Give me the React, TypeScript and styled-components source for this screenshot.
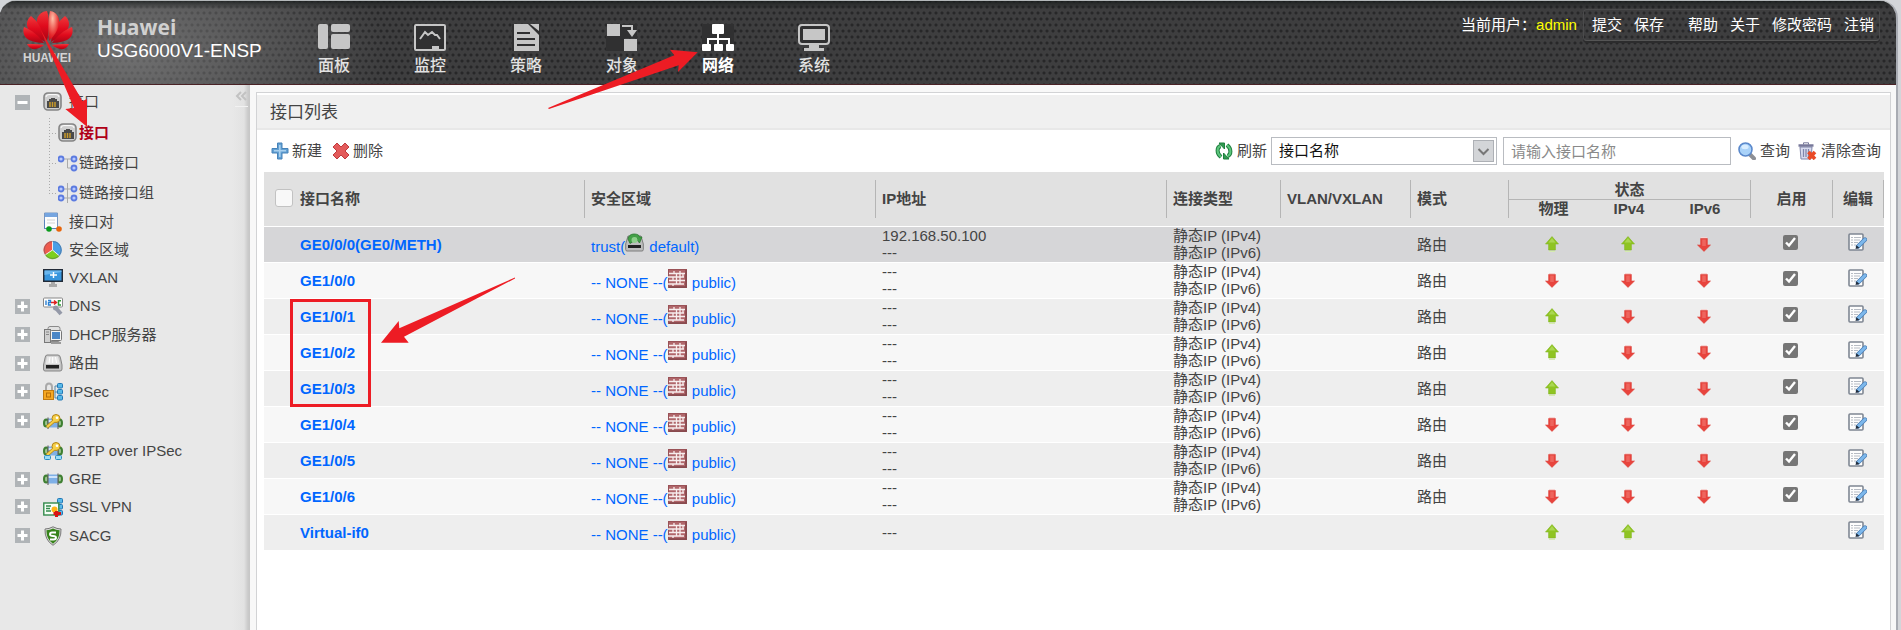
import React from 'react';
import styled, { createGlobalStyle, css } from 'styled-components';

const GlobalStyle = createGlobalStyle`
  *, *::before, *::after { box-sizing: border-box; }
  body {
    margin: 0;
    background: #d3d5d9;
    color: #444;
    font: 15px/18px "Liberation Sans", "Noto Sans CJK SC", sans-serif;
  }
  a { color: inherit; text-decoration: none; }
  svg { display: block; flex: none; }
  button, input, select { font: inherit; color: inherit; }
`;

/* ---------- page frame ---------- */

const Shell = styled.div`
  position: relative;
  display: flex;
  flex-direction: column;
  min-height: 100vh;
  margin-right: 3px;
  border-top: 1px solid #b4b8ba;
  border-right: 2px solid #a9acb3;
  border-radius: 16px 18px 0 0;
  background: #f8f8f8;
  overflow: hidden;
`;

const Header = styled.header`
  display: flex;
  align-items: flex-start;
  height: 84px;
  border-bottom: 1px solid #4a2226;
  background-color: #3e3e3f;
  background-image:
    linear-gradient(180deg, rgba(20, 24, 24, 0.7), rgba(20, 24, 24, 0) 8px),
    radial-gradient(ellipse 260px 150px at 125px 50px, rgba(160, 160, 160, 0.52), rgba(160, 160, 160, 0)),
    radial-gradient(circle at center, #272728 1px, rgba(39, 39, 40, 0) 2px),
    radial-gradient(circle at center, #272728 1px, rgba(39, 39, 40, 0) 2px);
  background-size: auto, auto, 6px 12px, 6px 12px;
  background-position: 0 0, 0 0, 0 0, 3px 6px;
`;

const Brand = styled.div`
  display: flex;
  flex: none;
  gap: 24px;
  width: 286px;
  padding: 10px 0 0 23px;
`;

const Product = styled.div`
  padding-top: 4px;
  color: #fff;
  font-size: 19px;
  line-height: 24px;
`;

const ProductName = styled.div`
  color: #d0d0d0;
  font-family: "Open Sans", "Liberation Sans", sans-serif;
  font-size: 21px;
  font-weight: 700;
`;

const Nav = styled.nav`
  display: flex;
`;

const NavLink = styled.a<{ $active?: boolean }>`
  display: flex;
  flex-direction: column;
  align-items: center;
  gap: 3px;
  width: 96px;
  padding-top: 23px;
  color: ${p => (p.$active ? '#fff' : '#c6c6c6')};
  font-size: 16px;
  font-weight: ${p => (p.$active ? 700 : 500)};
  line-height: 24px;
  span { color: ${p => (p.$active ? '#fff' : '#e2e2e2')}; }
`;

const UserArea = styled.div`
  display: flex;
  align-items: center;
  margin: 8px 16px 0 auto;
  color: #fff;
  white-space: nowrap;
`;

const UserName = styled.span`
  margin-right: 6px;
  color: #ff0;
`;

const UserMenu = styled.nav`
  display: flex;
  gap: 12px;
  padding: 6px 5px 6px 8px;
  border: 1px solid #4b4b4c;
  border-bottom-color: #555;
  border-radius: 4px;
  box-shadow: 0 2px 0 #2c2c2d;
`;

const MenuGap = styled.span`
  width: 0;
`;

const Body = styled.div`
  display: flex;
  flex: 1;
`;

/* ---------- sidebar ---------- */

const Sidebar = styled.aside`
  position: relative;
  flex: none;
  width: 250px;
  padding-top: 1px;
  background: linear-gradient(90deg, #e8e8e8 232px, #e2e2e2 244px, #cacaca 248px, #c6c6c6);
`;

const Collapse = styled.button`
  position: absolute;
  top: 1px;
  right: 2px;
  width: 13px;
  height: 21px;
  padding: 0;
  border: 0;
  border-bottom: 1px solid #f2f2f2;
  background: none;
  cursor: pointer;
`;

const Tree = styled.ul`
  margin: 0;
  padding: 0;
  list-style: none;
`;

const TreeRow = styled.div<{ $h: number }>`
  display: flex;
  align-items: center;
  height: ${p => p.$h}px;
  padding-left: 15px;
  white-space: nowrap;
`;

const Toggle = styled.button`
  display: flex;
  align-items: center;
  justify-content: center;
  width: 15px;
  height: 15px;
  margin-right: 13px;
  padding: 0;
  border: 0;
  background: #b0b4b7;
  cursor: pointer;
`;

const ToggleSpace = styled.span`
  width: 28px;
`;

const TreeLink = styled.a`
  display: flex;
  align-items: center;
  gap: 6px;
`;

const SubTree = styled(Tree)`
  margin-left: 49px;
  background: repeating-linear-gradient(180deg, #aaa 0 1px, transparent 1px 3px) 0 0 / 1px 76px no-repeat;
`;

const SubLink = styled.a<{ $active?: boolean }>`
  display: flex;
  align-items: center;
  gap: 1px;
  height: 30px;
  color: ${p => (p.$active ? '#b00018' : 'inherit')};
  font-weight: ${p => (p.$active ? 700 : 400)};
  &::before {
    content: "";
    width: 8px;
    height: 1px;
    background: repeating-linear-gradient(90deg, #aaa 0 1px, transparent 1px 3px);
  }
`;

/* ---------- content ---------- */

const Content = styled.main`
  flex: 1;
  min-width: 0;
  display: flex;
  padding: 7px 5px 0 6px;
`;

const Panel = styled.section`
  flex: 1;
  min-width: 0;
  border: solid #d2d3d5;
  border-width: 1px 1px 0;
  background: #fff;
`;

const PanelTitle = styled.h1`
  margin: 2px 0 0;
  padding: 5px 13px 2px;
  border-bottom: 2px solid #e8e8e8;
  background: #f0f0f0;
  font-size: 17px;
  font-weight: 400;
  line-height: 26px;
`;

const Toolbar = styled.div`
  display: flex;
  align-items: center;
  height: 42px;
  padding: 0 9px 0 14px;
`;

const ToolButton = styled.button`
  display: flex;
  align-items: center;
  gap: 3px;
  margin-right: 10px;
  padding: 0;
  border: 0;
  background: none;
  cursor: pointer;
  white-space: nowrap;
`;

const Filters = styled.form`
  display: flex;
  align-items: center;
  margin-left: auto;
  ${ToolButton} { gap: 4px; margin-right: 7px; }
  ${ToolButton}:first-child { margin-right: 4px; }
  ${ToolButton}:last-child { margin-right: 0; }
`;

const field = css`
  height: 28px;
  padding: 0 7px;
  border: 1px solid #b9bcc1;
  border-radius: 0;
  background: #fff;
  outline: 0;
`;

const SelectBox = styled.label`
  position: relative;
  display: block;
  margin-right: 6px;
  svg {
    position: absolute;
    top: 3px;
    right: 3px;
    pointer-events: none;
  }
`;

const Select = styled.select`
  ${field}
  width: 226px;
  color: #111;
  appearance: none;
`;

const Query = styled.input`
  ${field}
  width: 228px;
  margin-right: 7px;
  &::placeholder { color: #8a8a8a; opacity: 1; }
`;

const TableWrap = styled.div`
  padding: 0 6px 0 7px;
`;

const Table = styled.table`
  width: 100%;
  border-spacing: 0;
  table-layout: fixed;
`;

const Head = styled.th<{ $pos?: 'upper' | 'lower' }>`
  padding: ${p => (p.$pos === 'upper' ? '8px 0 0' : p.$pos === 'lower' ? '0 0 8px' : '8px 0')};
  border-bottom: ${p => (p.$pos === 'upper' ? '0' : '1px solid #fff')};
  background: #e1e1e1;
  text-align: left;
`;

const HeadLabel = styled.div<{ $h?: number; $bar?: boolean; $center?: boolean; $under?: boolean; $end?: boolean }>`
  display: flex;
  align-items: center;
  justify-content: ${p => (p.$center ? 'center' : 'flex-start')};
  height: ${p => p.$h ?? 38}px;
  padding-left: ${p => (p.$center ? 0 : 6)}px;
  border: 0 solid #b5b5b5;
  border-left-width: ${p => (p.$bar === false ? 0 : 1)}px;
  border-right-width: ${p => (p.$end ? 1 : 0)}px;
  border-bottom-width: ${p => (p.$under ? 1 : 0)}px;
  white-space: nowrap;
`;

const SelectAll = styled.input`
  appearance: none;
  width: 18px;
  height: 18px;
  margin: 0 7px 3px 5px;
  border: 1px solid #c2c2c2;
  border-radius: 3px;
  background: #f8f8f8;
`;

const Cell = styled.td<{ $center?: boolean }>`
  height: 36px;
  padding: ${p => (p.$center ? '0 2px 1px 0' : '0 0 1px 7px')};
  border-bottom: 1px solid #fff;
  line-height: 17px;
  text-align: ${p => (p.$center ? 'center' : 'left')};
  vertical-align: middle;
  white-space: nowrap;
  & > svg { margin: 0 auto; }
`;

const Row = styled.tr`
  background: #eee;
  &:nth-child(even) { background: #f7f7f7; }
  &:first-child { background: #d6d6d8; }
  &:last-child ${Cell} { height: 35px; border-bottom: 0; }
`;

const NameCell = styled(Cell)`
  padding-left: 36px;
`;

const NameLink = styled.a`
  color: #06f;
  font-weight: 700;
`;

const ZoneLink = styled.a`
  color: #06f;
  svg { display: inline-block; vertical-align: baseline; margin-right: 1px; }
`;

const Enable = styled.input`
  display: block;
  width: 15px;
  height: 15px;
  margin: 0 auto 4px;
  accent-color: #767676;
`;

const EditButton = styled.button`
  display: block;
  margin: 0 auto 3px;
  padding: 0;
  border: 0;
  background: none;
  cursor: pointer;
`;

const Marks = styled.svg`
  position: absolute;
  top: -1px;
  left: 0;
  pointer-events: none;
`;

/* ---------- drawings ---------- */

const Logo = () => (
  <svg width="50" height="54" viewBox="23 11 50 54" role="img" aria-label="Huawei">
    <defs>
      <linearGradient id="petal" x1="0" y1="0" x2="0" y2="1">
        <stop offset="0" stopColor="#ef3a3c" />
        <stop offset="0.5" stopColor="#e00a1c" />
        <stop offset="1" stopColor="#a80515" />
      </linearGradient>
      <radialGradient id="petalGlow" cx="0.4" cy="0.25" r="0.8">
        <stop offset="0" stopColor="#ffc0a8" />
        <stop offset="0.7" stopColor="#e62a2c" />
        <stop offset="1" stopColor="#c80a1a" />
      </radialGradient>
    </defs>
    <g fill="url(#petal)">
      <path d="M47 11 C39 12 36 18 37 24 C38 31 43 37 47 41 C49 32 50 19 47 11Z" />
      <path d="M31 16 C26 20 26 26 29 30 C33 36 40 39 45 42 C44 33 39 22 31 16Z" />
      <path d="M24 27 C22 33 25 38 29 40 C33 42 39 43 44 43 C40 37 32 30 24 27Z" />
      <path d="M27 44 C30 50 35 50 39 48 C41 47 43 46 44 45 C40 44 33 44 27 44Z" />
      <path d="M65 16 C70 20 70 26 67 30 C63 36 56 39 51 42 C52 33 57 22 65 16Z" />
      <path d="M72 27 C74 33 71 38 67 40 C63 42 57 43 52 43 C56 37 64 30 72 27Z" />
      <path d="M69 44 C66 50 61 50 57 48 C55 47 53 46 52 45 C56 44 63 44 69 44Z" />
    </g>
    <path fill="url(#petalGlow)" d="M50 11 C57 12 60 18 59 24 C58 31 53 37 49 41 C48 32 48 19 50 11Z" />
    <text x="23" y="62" fill="#d4d4d4" fontFamily="Liberation Sans" fontWeight="700" fontSize="12">HUAWEI</text>
  </svg>
);

const NavIcon = ({ kind }: { kind: string }) => (
  <svg width="32" height="27" viewBox="0 0 32 27" fill="currentColor" aria-hidden="true">
    {kind === 'panel' && (
      <>
        <rect width="10" height="25" rx="2" />
        <rect x="13" width="19" height="8" rx="2" />
        <rect x="13" y="10" width="19" height="15" rx="2" />
      </>
    )}
    {kind === 'monitor' && (
      <>
        <rect x="1" y="1" width="30" height="25" rx="1" fill="#303031" stroke="currentColor" strokeWidth="2" />
        <path d="M6 15 L11 8 L14 11 L18 8 L21 11 L23 11 L26 15" fill="none" stroke="currentColor" strokeWidth="2" />
        <path d="M18 26 V22 H25 V26Z" />
      </>
    )}
    {kind === 'policy' && (
      <>
        <rect x="2" width="28" height="27" fill="#303031" />
        <path d="M4 0 H18 L29 11 V27 H4Z" />
        <path d="M20 0 H29 V7Z" />
        <path d="M7 9 H20 M7 15 H25 M7 21 H25" stroke="#303031" strokeWidth="2" />
      </>
    )}
    {kind === 'object' && (
      <>
        <path d="M0 12 H18 V27 H0Z M14 0 H31 V14 H14Z" fill="#303031" />
        <rect x="1" width="13" height="12" />
        <rect x="18" y="15" width="13" height="12" />
        <path d="M16 2 H26 V7" fill="none" stroke="currentColor" strokeWidth="2" />
        <path d="M21 6 H31 L26 13Z" />
      </>
    )}
    {kind === 'network' && (
      <>
        <rect width="32" height="27" fill="#303031" />
        <rect x="10" width="12" height="10" rx="1" />
        <path d="M16 9 V21 M6 21 V15 H27 V21" fill="none" stroke="currentColor" strokeWidth="2" />
        <rect y="20" width="9" height="7" rx="1" />
        <rect x="12" y="20" width="9" height="7" rx="1" />
        <rect x="24" y="20" width="8" height="7" rx="1" />
      </>
    )}
    {kind === 'system' && (
      <>
        <rect x="1" y="1" width="30" height="19" rx="3" fill="#303031" stroke="currentColor" strokeWidth="2" />
        <rect x="5" y="5" width="22" height="11" />
        <path d="M11 20 H21 V24 H26 V27 H6 V24 H11Z" />
      </>
    )}
  </svg>
);

const Port = () => (
  <>
    <rect x="1" y="1" width="17" height="17" rx="4" fill="#cfcfcf" stroke="#858585" strokeWidth="1.6" />
    <path d="M3 5 Q3 2.6 6 2.6 H13 Q16 2.6 16 5" fill="none" stroke="#fff" />
    <path d="M4 9 H6 V7 H8 V6 H12 V7 H14 V9 H16 V16 H4Z" fill="#4a4a4a" />
    <path d="M7 10 V15 M9.5 10 V15 M12 10 V15" stroke="#c99a2a" strokeWidth="1.5" />
  </>
);

const Nodes = ({ at }: { at: number[][] }) => (
  <>
    {at.map(([x, y]) => (
      <circle key={`${x}-${y}`} cx={x} cy={y} r="2.5" fill="#b9caff" stroke="#5c7be0" strokeWidth="1.8" />
    ))}
  </>
);

const Blocks = () => (
  <g fill="#58b9e8" stroke="#2277b5" strokeWidth="1">
    <rect x="14.5" y="1.5" width="5" height="4.5" rx="1" />
    <rect x="14.5" y="7.5" width="5" height="4.5" rx="1" />
    <rect x="14.5" y="13.5" width="5" height="4.5" rx="1" />
  </g>
);

const Tunnel = () => (
  <>
    <ellipse cx="3.2" cy="10" rx="2.2" ry="3.6" fill="#9bc48f" stroke="#3e7f31" strokeWidth="2" />
    <ellipse cx="16.8" cy="10" rx="2.2" ry="3.6" fill="#9bc48f" stroke="#3e7f31" strokeWidth="2" />
    <rect x="5" y="5.5" width="10" height="9" fill="#7fb0e6" />
    <path d="M5 8 H15" stroke="#cfe3fa" strokeWidth="2" />
    <path d="M5 4.5 V16 M15 4.5 V16" stroke="#666" strokeWidth="1.2" />
  </>
);

const Key = () => (
  <>
    <path d="M4 14 L12 7" stroke="#b58514" strokeWidth="3.6" />
    <circle cx="13" cy="5.5" r="4" fill="#f5cf4a" stroke="#b58514" />
    <path d="M4 14 L12 7" stroke="#f5cf4a" strokeWidth="2.2" />
    <circle cx="14" cy="4.8" r="1.3" fill="#fff" />
  </>
);

const TreeIcon = ({ kind }: { kind: string }) => (
  <svg width="20" height="20" viewBox="0 0 20 20" aria-hidden="true">
    {kind === 'port' && <Port />}
    {kind === 'link' && (
      <>
        <path d="M6 6 H14 M9.5 6 V15 H14" fill="none" stroke="#aaa" />
        <Nodes at={[[3, 6], [16, 6], [16, 15]]} />
      </>
    )}
    {kind === 'group' && (
      <>
        <path d="M9.5 0 V20 M5 6 H14 M5 15 H14" stroke="#aaa" />
        <Nodes at={[[3, 6], [16, 6], [3, 15], [16, 15]]} />
      </>
    )}
    {kind === 'pair' && (
      <>
        <path d="M1.5 1 H14.5 V16.5 H1.5Z" fill="#fdfdfd" stroke="#7796c0" />
        <path d="M2 1 H14 V5 H2Z" fill="#75a5e0" />
        <path d="M4 8 H12 M4 11 H12" stroke="#d3d3d3" />
        <path d="M1.5 8 V16.5 H18" fill="none" stroke="#5a83bb" />
        <circle cx="6" cy="17" r="2.8" fill="#0a9a1c" />
        <circle cx="16" cy="17" r="2.8" fill="#e8650a" />
      </>
    )}
    {kind === 'pie' && (
      <>
        <path d="M9.5 10 L2 15 A9 9 0 0 1 9.5 1Z" fill="#ef5a4d" />
        <path d="M9.5 10 V1 A9 9 0 0 1 16.5 16Z" fill="#4aa0e8" />
        <path d="M9.5 10 L16.5 16 A9 9 0 0 1 2 15Z" fill="#7ccf1e" />
        <path d="M9.5 1 V10 L2 15 M9.5 10 L16.5 16" fill="none" stroke="#eee" />
        <circle cx="9.7" cy="10" r="8.5" fill="none" stroke="#556" strokeOpacity="0.45" />
      </>
    )}
    {kind === 'vxlan' && (
      <>
        <rect x="0" y="1" width="20" height="13" fill="#222b38" />
        <rect x="1.5" y="2.5" width="17" height="10" fill="#3795dd" />
        <path d="M1.5 7 L18.5 4 V2.5 H1.5Z" fill="#69b6ee" />
        <path d="M7 7 H14 M10.5 4 V10" stroke="#fff" strokeWidth="1.4" />
        <path d="M8 14 H12 V16 H14 V19 H6 V16 H8Z" fill="#aaa" />
      </>
    )}
    {kind === 'dns' && (
      <>
        <rect x="0.5" y="2" width="19" height="9" rx="1" fill="#fff" stroke="#888" />
        <path d="M3 4.5 V9 M5 4.5 H7.5 V6.5 H5.5 V9 H8" fill="none" stroke="#2a7fd0" strokeWidth="1.4" />
        <path d="M8 6.5 H13 M11 4.5 L13.5 6.5 L11 8.5" fill="none" stroke="#d22" strokeWidth="1.5" />
        <path d="M18 4.7 H15.5 V9 H18" fill="none" stroke="#2c9a35" strokeWidth="1.5" />
        <path d="M12 11 L18 18" stroke="#9499a8" strokeWidth="4" />
        <circle cx="12.5" cy="12" r="2.5" fill="#9499a8" />
      </>
    )}
    {kind === 'dhcp' && (
      <>
        <rect x="5" y="1.5" width="12" height="15" rx="2" fill="#e2e2e2" stroke="#8a8a8a" />
        <rect x="1.5" y="4.5" width="6" height="13" fill="#cfcfcf" stroke="#777" />
        <path d="M3 7 H6 M3 9.5 H6" stroke="#888" />
        <rect x="7.5" y="5.5" width="11" height="10" rx="1" fill="#f4f4f4" stroke="#777" />
        <rect x="9" y="7" width="8" height="7" fill="#4b86c6" />
        <path d="M8 18 H18" stroke="#999" strokeWidth="2" />
      </>
    )}
    {kind === 'route' && (
      <>
        <path d="M4 2 H15 Q17 2 17.5 5 L19 12 V16 Q19 18 17 18 H2 Q0.5 18 0.5 16 V12 L2 5 Q2.4 2 4 2Z" fill="#c4c4c4" stroke="#858585" />
        <path d="M4 3.5 H15 L17 11 H2.5Z" fill="#e6e6e6" />
        <path d="M7 4 L6 10 M9.7 4 V10 M12.5 4 L13.5 10" stroke="#fff" />
        <rect x="3" y="12" width="13" height="3.5" fill="#222" />
      </>
    )}
    {kind === 'ipsec' && (
      <>
        <path d="M3 9 V5 Q3 1.5 6 1.5 Q9 1.5 9 5 V9" fill="none" stroke="#aaa" strokeWidth="2" />
        <rect x="0.5" y="8.5" width="10" height="9" fill="#f6a823" stroke="#c07a12" />
        <rect x="3.5" y="11" width="4" height="4" fill="none" stroke="#b56d08" />
        <path d="M14 4 H12 V16 H14 M12 10 H14" fill="none" stroke="#5588a8" />
        <Blocks />
      </>
    )}
    {kind === 'l2tp' && (
      <g transform="translate(0 2)">
        <Tunnel />
        <Key />
      </g>
    )}
    {kind === 'l2tpsec' && (
      <>
        <Tunnel />
        <Key />
        <rect x="1.5" y="14.5" width="6" height="4" rx="1" fill="#9bdcf5" stroke="#2a8cc0" />
        <rect x="12.5" y="14.5" width="6" height="4" rx="1" fill="#9bdcf5" stroke="#2a8cc0" />
      </>
    )}
    {kind === 'gre' && <Tunnel />}
    {kind === 'ssl' && (
      <>
        <Blocks />
        <rect x="0.8" y="6" width="15" height="12" fill="#f7fff7" stroke="#338a4c" strokeWidth="1.4" />
        <path d="M3 9 H8 M3 11.5 H7 M3 14 H8" stroke="#338a4c" strokeWidth="1.4" />
        <circle cx="11.5" cy="12.5" r="3" fill="#ffb515" />
        <path d="M10.5 16.5 H18 M13.5 14 V20" stroke="#d81414" strokeWidth="3" />
      </>
    )}
    {kind === 'sacg' && (
      <>
        <path d="M10 0.8 Q14 3 18 3 Q18.5 14 10 19.3 Q1.5 14 2 3 Q6 3 10 0.8Z" fill="#dcdcdc" stroke="#777" />
        <path d="M10 2.4 Q13 4.2 16.6 4.2 Q16.6 13.3 10 17.8 Q3.4 13.3 3.4 4.2 Q7 4.2 10 2.4Z" fill="#37831b" />
        <path d="M13 6.5 H9 Q7 6.5 7 8.3 Q7 10 10 10 Q13 10 13 11.8 Q13 13.5 10.5 13.5 H7" fill="none" stroke="#fff" strokeWidth="1.9" />
      </>
    )}
  </svg>
);

const ToolIcon = ({ kind }: { kind: string }) => (
  <svg width={kind === 'clear' ? 20 : 18} height="18" viewBox="0 0 18 18" aria-hidden="true">
    {kind === 'add' && (
      <>
        <path d="M6.5 1 H11 V6.5 H17 V11 H11 V17 H6.5 V11 H1 V6.5 H6.5Z" fill="#62a0d3" stroke="#4682b8" strokeLinejoin="round" />
        <path d="M8.8 3 V15 M3 8.7 H15" stroke="#a9d0ee" strokeWidth="1.6" />
      </>
    )}
    {kind === 'delete' && (
      <path d="M5 1 L9 5 L13 1 L17 5 L13 9 L17 13 L13 17 L9 13 L5 17 L1 13 L5 9 L1 5Z" fill="#e35b5b" stroke="#c03a3e" strokeLinejoin="round" />
    )}
    {kind === 'refresh' && (
      <g fill="none" strokeLinejoin="round">
        <path d="M6 15 Q2.5 12 2.6 8.5 Q2.6 5 5.5 4" stroke="#1f7f3f" strokeWidth="4" />
        <path d="M12 3 Q15.5 6 15.4 9.5 Q15.4 13 12.5 14" stroke="#1f7f3f" strokeWidth="4" />
        <path d="M4 1 H9.5 V7Z" fill="#2f9a50" stroke="#1f7f3f" />
        <path d="M14 17 H8.5 V11Z" fill="#2f9a50" stroke="#1f7f3f" />
        <path d="M6 15 Q2.5 12 2.6 8.5 Q2.6 5 5.5 4" stroke="#5cc57c" strokeWidth="2" />
        <path d="M12 3 Q15.5 6 15.4 9.5 Q15.4 13 12.5 14" stroke="#5cc57c" strokeWidth="2" />
      </g>
    )}
    {kind === 'search' && (
      <>
        <path d="M11.5 12 L16 16.5" stroke="#8d8f95" strokeWidth="4" strokeLinecap="round" />
        <circle cx="7.5" cy="7.5" r="6.5" fill="#a9d2f9" stroke="#5b89cc" strokeWidth="1.6" />
        <ellipse cx="7" cy="5" rx="3.6" ry="2.2" fill="#d9edff" />
      </>
    )}
    {kind === 'clear' && (
      <>
        <path d="M2 5 H14 L13 17 H3Z" fill="#d9dcef" stroke="#8086ab" />
        <path d="M5.5 7 V15 M8 7 V15 M10.5 7 V15" stroke="#8086ab" strokeWidth="1.3" />
        <path d="M0.5 3.5 H15.5" stroke="#77789a" strokeWidth="2.4" />
        <path d="M5.5 2.5 V0.8 H10.5 V2.5" fill="none" stroke="#77789a" />
        <path d="M10.5 10 L17 17 M17 10 L10.5 17" stroke="#ea4a26" strokeWidth="3.6" />
      </>
    )}
  </svg>
);

const ChevronBox = () => (
  <svg width="21" height="22" viewBox="0 0 21 22" aria-hidden="true">
    <rect x="0.5" y="0.5" width="20" height="21" fill="#d3d5d8" stroke="#adb0b5" />
    <path d="M5.5 9 L10.5 14 L15.5 9" fill="none" stroke="#777" strokeWidth="2" />
  </svg>
);

const StateArrow = ({ up }: { up: boolean }) => (
  <svg width="14" height="16" viewBox="0 0 14 16" role="img" aria-label={up ? 'Up' : 'Down'}>
    {up ? (
      <>
        <path d="M7 0.6 L13.5 8 H10.4 V14 H3.6 V8 H0.5Z" fill="#8fc422" stroke="#83b722" strokeWidth="0.6" />
        <path d="M7 2 L10.5 6.5 H3.5Z" fill="#abd752" />
        <path d="M4 15.5 H10" stroke="#d5ecb0" />
      </>
    ) : (
      <>
        <path d="M7 15.4 L0.5 9 H3.6 V2.5 H10.4 V9 H13.5Z" fill="#e8443d" stroke="#dc4640" strokeWidth="0.6" />
        <path d="M5.2 3.5 H8.8 V10 H5.2Z" fill="#ee655d" />
        <path d="M4 1.5 H10" stroke="#f7d5d3" />
      </>
    )}
  </svg>
);

const EditIcon = () => (
  <svg width="19" height="19" viewBox="0 0 19 19" aria-hidden="true">
    <rect x="1" y="1" width="14" height="16" rx="1" fill="#fdfdfd" stroke="#7f8793" strokeWidth="1.6" />
    <path d="M3 4.5 H5 M6 4.5 H13 M3 7 H5 M6 7 H12 M3 9.5 H5 M6 9.5 H10 M3 12 H5 M6 12 H8" stroke="#b7bcc4" />
    <path d="M10 13.5 L17 6.5" stroke="#4a7db5" strokeWidth="4.4" strokeLinecap="round" />
    <path d="M10.5 13 L17 6.5" stroke="#7db8ec" strokeWidth="3" strokeLinecap="round" />
    <path d="M7.5 16 L8.5 12.2 L11.5 15Z" fill="#222d3c" />
  </svg>
);

const Firewall = () => (
  <svg width="19" height="19" viewBox="0 0 19 19" aria-hidden="true">
    <rect x="0.5" y="0.5" width="18" height="18" fill="#b0666a" stroke="#9a5257" />
    <path d="M1 4.5 H17 M0 8 H16 M1 11.5 H17 M0 15 H16 M6 2 V4.5 M12 2 V15 M8.5 4.5 V8 M5 8 V11.5 M8.5 4.5 V15 M15 4.5 V8 M5 15 V17" stroke="#f7eeee" strokeWidth="1.3" />
    <path d="M18 1 V18 H1" fill="none" stroke="#84484c" strokeWidth="1.5" />
  </svg>
);

const DefaultSystem = () => (
  <svg width="19" height="19" viewBox="0 0 19 19" aria-hidden="true">
    <path d="M3 3 H16 L18.3 11 V16.5 Q18.3 18 17 18 H2 Q0.7 18 0.7 16.5 V11Z" fill="#bdbdbd" stroke="#7c7c7c" />
    <rect x="3" y="12" width="13" height="3" fill="#222" />
    <path d="M3 6 Q4 1 9 1 Q14 1 14.5 4 L17 4 L14.5 10 L11 5.5 H12.5 Q9 3 7 6 L9 8 L5 10.5Z" fill="#43a047" stroke="#2b7a30" strokeWidth="0.8" />
    <circle cx="9.5" cy="7" r="3" fill="#8dd08a" />
  </svg>
);

/* ---------- data ---------- */

const navItems = [
  ['panel', '面板'],
  ['monitor', '监控'],
  ['policy', '策略'],
  ['object', '对象'],
  ['network', '网络'],
  ['system', '系统'],
];

const subItems = [
  ['port', '接口'],
  ['link', '链路接口'],
  ['group', '链路接口组'],
];

type Entry = { icon: string; label: string; h: number; open?: boolean };

const treeItems: Entry[] = [
  { icon: 'pair', label: '接口对', h: 28 },
  { icon: 'pie', label: '安全区域', h: 28 },
  { icon: 'vxlan', label: 'VXLAN', h: 28 },
  { icon: 'dns', label: 'DNS', h: 28, open: true },
  { icon: 'dhcp', label: 'DHCP服务器', h: 29, open: true },
  { icon: 'route', label: '路由', h: 28, open: true },
  { icon: 'ipsec', label: 'IPSec', h: 29, open: true },
  { icon: 'l2tp', label: 'L2TP', h: 29, open: true },
  { icon: 'l2tpsec', label: 'L2TP over IPSec', h: 31 },
  { icon: 'gre', label: 'GRE', h: 26, open: true },
  { icon: 'ssl', label: 'SSL VPN', h: 29, open: true },
  { icon: 'sacg', label: 'SACG', h: 29, open: true },
];

type Iface = { name: string; ip?: string; trust?: boolean; virtual?: boolean; states: string };

const interfaces: Iface[] = [
  { name: 'GE0/0/0(GE0/METH)', ip: '192.168.50.100', trust: true, states: 'uud' },
  { name: 'GE1/0/0', states: 'ddd' },
  { name: 'GE1/0/1', states: 'udd' },
  { name: 'GE1/0/2', states: 'udd' },
  { name: 'GE1/0/3', states: 'udd' },
  { name: 'GE1/0/4', states: 'ddd' },
  { name: 'GE1/0/5', states: 'ddd' },
  { name: 'GE1/0/6', states: 'ddd' },
  { name: 'Virtual-if0', virtual: true, states: 'uu-' },
];

/* ---------- components ---------- */

const ToggleMark = ({ minus }: { minus?: boolean }) => (
  <svg width="11" height="11" viewBox="0 0 11 11" aria-hidden="true">
    <path d={minus ? 'M0.5 5.5 H10.5' : 'M0.5 5.5 H10.5 M5.5 0.5 V10.5'} stroke="#fff" strokeWidth="3" />
  </svg>
);

const InterfaceRow = ({ item }: { item: Iface }) => (
  <Row>
    <NameCell><NameLink href="#">{item.name}</NameLink></NameCell>
    <Cell>
      <ZoneLink href="#">
        {item.trust ? <>trust(<DefaultSystem /> default)</> : <>-- NONE --(<Firewall /> public)</>}
      </ZoneLink>
    </Cell>
    <Cell>
      {!item.virtual && <div>{item.ip ?? '---'}</div>}
      <div>---</div>
    </Cell>
    <Cell>
      {!item.virtual && (
        <>
          <div>静态IP (IPv4)</div>
          <div>静态IP (IPv6)</div>
        </>
      )}
    </Cell>
    <Cell />
    <Cell>{!item.virtual && '路由'}</Cell>
    {item.states.split('').map((s, i) => (
      <Cell $center key={i}>{s !== '-' && <StateArrow up={s === 'u'} />}</Cell>
    ))}
    <Cell $center>
      {!item.virtual && <Enable type="checkbox" defaultChecked aria-label={`启用 ${item.name}`} />}
    </Cell>
    <Cell $center>
      <EditButton type="button" aria-label={`编辑 ${item.name}`}><EditIcon /></EditButton>
    </Cell>
  </Row>
);

const InterfaceTable = () => (
  <TableWrap>
    <Table>
      <colgroup>
        <col />
        {[291, 291, 114, 130, 98, 90, 62, 90, 82, 52].map((w, i) => <col key={i} width={w} />)}
      </colgroup>
      <thead>
        <tr>
          <Head rowSpan={2}>
            <HeadLabel $bar={false}>
              <SelectAll type="checkbox" id="all" aria-label="全选" />接口名称
            </HeadLabel>
          </Head>
          {['安全区域', 'IP地址', '连接类型', 'VLAN/VXLAN', '模式'].map(t => (
            <Head rowSpan={2} key={t}><HeadLabel>{t}</HeadLabel></Head>
          ))}
          <Head colSpan={3} $pos="upper"><HeadLabel $h={20} $center $under>状态</HeadLabel></Head>
          <Head rowSpan={2}><HeadLabel $center>启用</HeadLabel></Head>
          <Head rowSpan={2}><HeadLabel $center $end>编辑</HeadLabel></Head>
        </tr>
        <tr>
          {['物理', 'IPv4', 'IPv6'].map((t, i) => (
            <Head $pos="lower" key={t}><HeadLabel $h={18} $center $bar={i === 0}>{t}</HeadLabel></Head>
          ))}
        </tr>
      </thead>
      <tbody>
        {interfaces.map(item => <InterfaceRow key={item.name} item={item} />)}
      </tbody>
    </Table>
  </TableWrap>
);

export default function App() {
  return (
    <>
      <GlobalStyle />
      <Shell>
        <Header>
          <Brand>
            <Logo />
            <Product>
              <ProductName>Huawei</ProductName>
              USG6000V1-ENSP
            </Product>
          </Brand>
          <Nav>
            {navItems.map(([kind, label]) => (
              <NavLink href="#" key={kind} $active={kind === 'network'}>
                <NavIcon kind={kind} />
                <span>{label}</span>
              </NavLink>
            ))}
          </Nav>
          <UserArea>
            当前用户：<UserName>admin</UserName>
            <UserMenu>
              <a href="#">提交</a>
              <a href="#">保存</a>
              <MenuGap />
              <a href="#">帮助</a>
              <a href="#">关于</a>
              <a href="#">修改密码</a>
              <a href="#">注销</a>
            </UserMenu>
          </UserArea>
        </Header>
        <Body>
          <Sidebar>
            <Collapse type="button" aria-label="收起">
              <svg width="12" height="12" viewBox="0 0 12 12" fill="none" stroke="#c2c2c2" strokeWidth="2">
                <path d="M6 2 L2 6 L6 10 M11 2 L7 6 L11 10" />
              </svg>
            </Collapse>
            <Tree>
              <li>
                <TreeRow $h={32}>
                  <Toggle type="button" aria-label="收起接口"><ToggleMark minus /></Toggle>
                  <TreeLink href="#"><TreeIcon kind="port" />接口</TreeLink>
                </TreeRow>
                <SubTree>
                  {subItems.map(([icon, label], i) => (
                    <li key={label}>
                      <SubLink href="#" $active={i === 0}><TreeIcon kind={icon} />{label}</SubLink>
                    </li>
                  ))}
                </SubTree>
              </li>
              {treeItems.map(({ icon, label, h, open }) => (
                <li key={label}>
                  <TreeRow $h={h}>
                    {open ? <Toggle type="button" aria-label={`展开${label}`}><ToggleMark /></Toggle> : <ToggleSpace />}
                    <TreeLink href="#"><TreeIcon kind={icon} />{label}</TreeLink>
                  </TreeRow>
                </li>
              ))}
            </Tree>
          </Sidebar>
          <Content>
            <Panel>
              <PanelTitle>接口列表</PanelTitle>
              <Toolbar>
                <ToolButton type="button"><ToolIcon kind="add" />新建</ToolButton>
                <ToolButton type="button"><ToolIcon kind="delete" />删除</ToolButton>
                <Filters onSubmit={e => e.preventDefault()}>
                  <ToolButton type="button"><ToolIcon kind="refresh" />刷新</ToolButton>
                  <SelectBox>
                    <Select aria-label="查询条件" defaultValue="name">
                      <option value="name">接口名称</option>
                    </Select>
                    <ChevronBox />
                  </SelectBox>
                  <Query type="text" aria-label="接口名称" placeholder="请输入接口名称" />
                  <ToolButton type="submit"><ToolIcon kind="search" />查询</ToolButton>
                  <ToolButton type="reset"><ToolIcon kind="clear" />清除查询</ToolButton>
                </Filters>
              </Toolbar>
              <InterfaceTable />
            </Panel>
          </Content>
        </Body>
        <Marks width="720" height="420" viewBox="0 0 720 420" fill="#ed1c24" aria-hidden="true">
          <path d="M40.5 29.5 L82.5 101 L87 99 L87 126.7 L65.3 109 L74 108Z" />
          <path d="M548 108 L674.3 55.3 L670 49.7 L697.7 52.3 L678 72 L678.7 65.3 L549 109Z" />
          <path d="M515 277.5 L399.3 328.3 L398.7 321 L381 342.7 L408.7 342.7 L404 336.7 L515 278.5Z" />
          <rect x="291.5" y="300.5" width="78" height="105" fill="none" stroke="#ed1c24" strokeWidth="3" />
        </Marks>
      </Shell>
    </>
  );
}
